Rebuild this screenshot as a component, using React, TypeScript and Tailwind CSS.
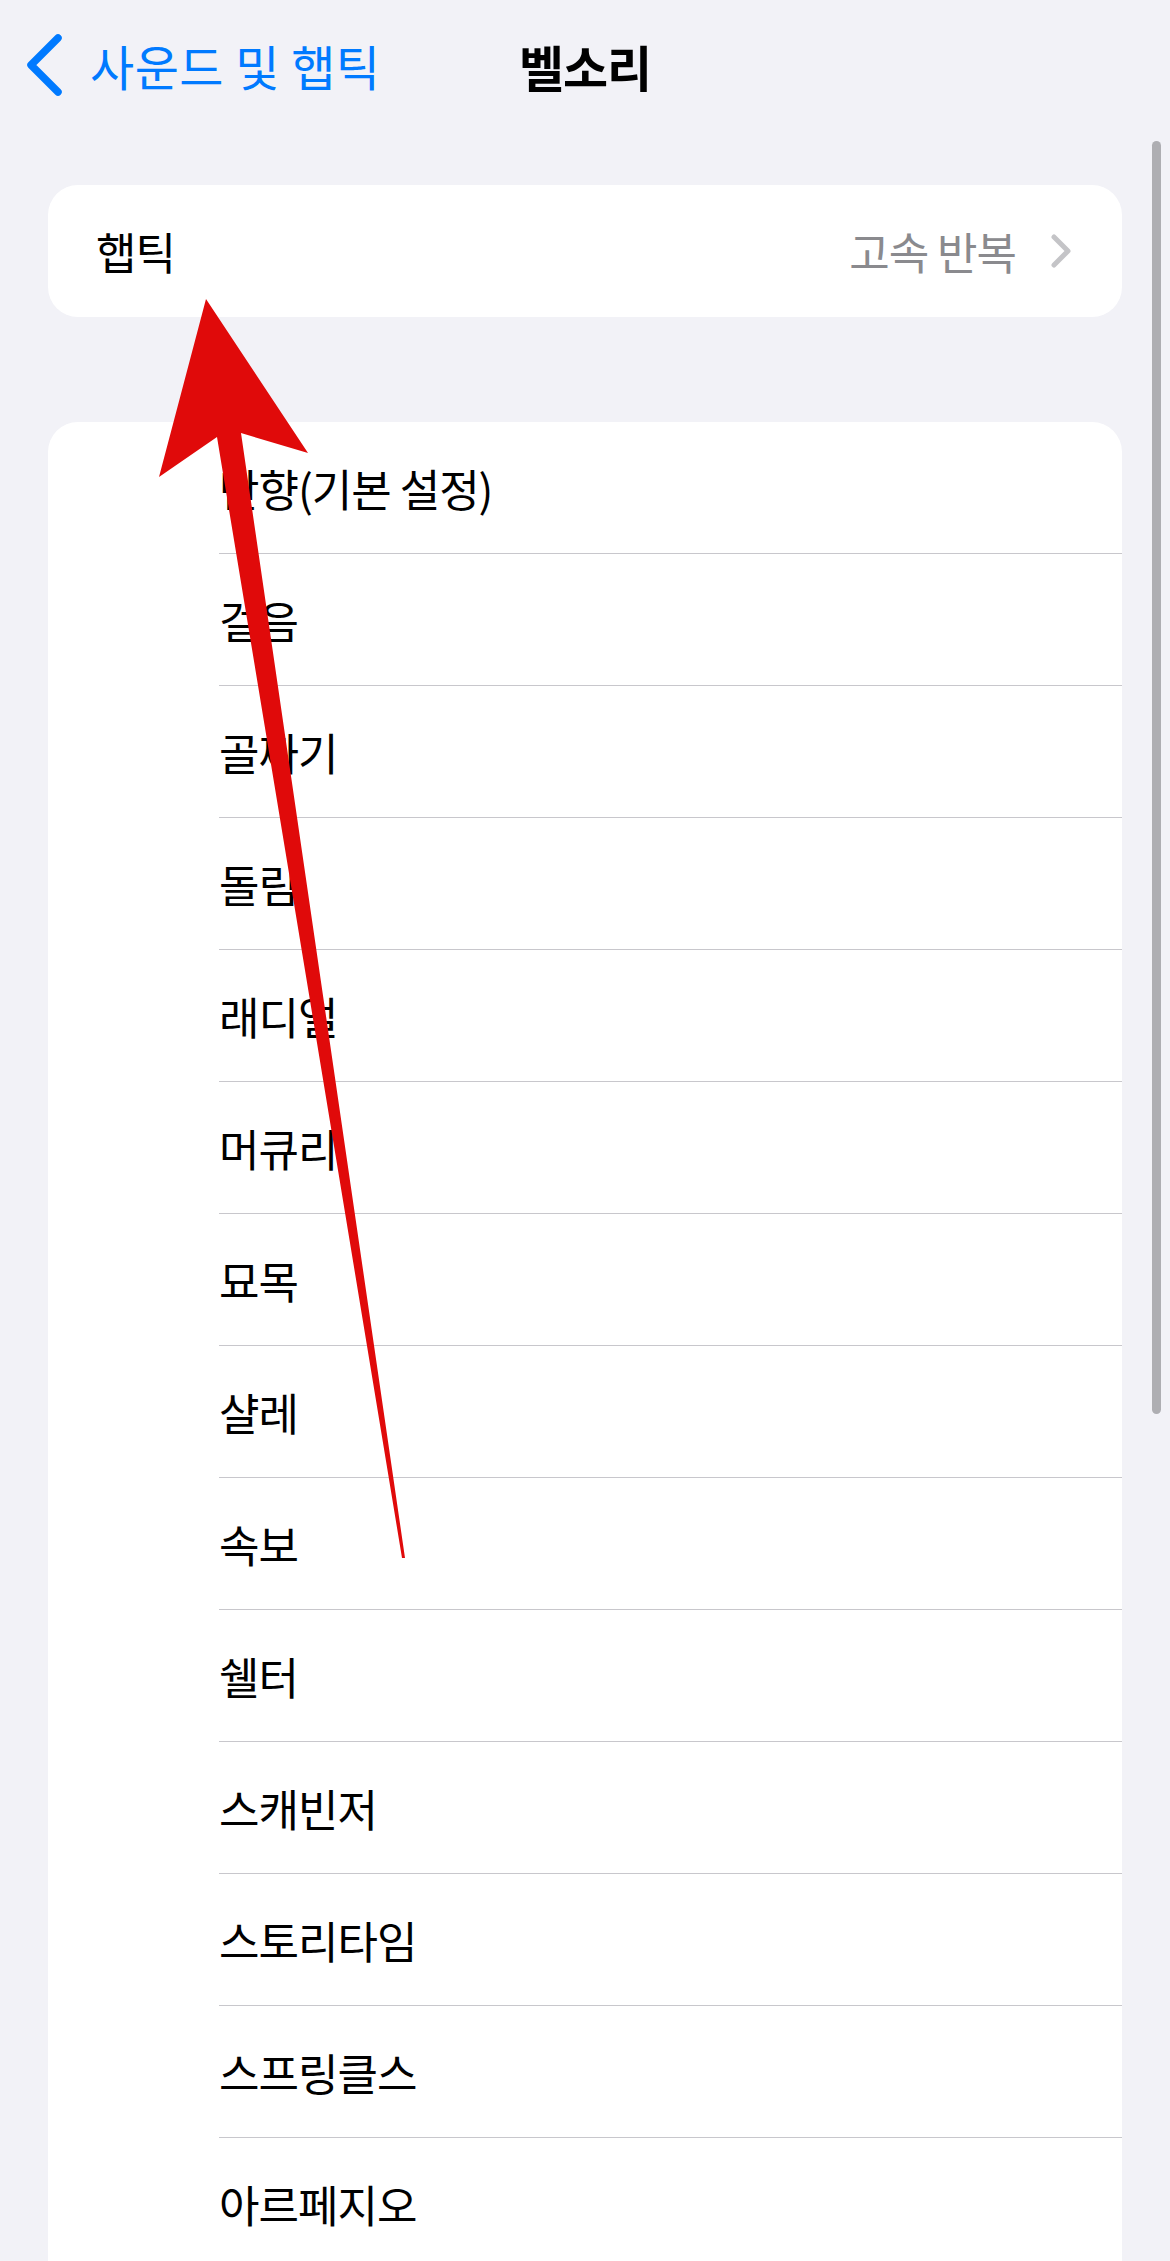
import React from "react";

const TONES = [
  "반향(기본 설정)",
  "걸음",
  "골짜기",
  "돌림",
  "래디얼",
  "머큐리",
  "묘목",
  "샬레",
  "속보",
  "쉘터",
  "스캐빈저",
  "스토리타임",
  "스프링클스",
  "아르페지오",
];

const FONT = {
  fontFamily: '"Noto Sans CJK KR", "Noto Sans", sans-serif',
};

export default function App() {
  return (
    <div
      className="relative w-[1170px] h-[2261px] overflow-hidden bg-[#f2f2f7] text-black"
      style={FONT}
    >
      {/* 내비게이션 바 */}
      <div className="grid grid-cols-[1fr_auto_1fr] items-center h-[130px]">
        <div className="flex items-center pl-[24px] gap-[26px] text-[#007aff]">
          <svg width="40" height="62" viewBox="0 0 40 62" fill="none">
            <path
              d="M34 4 L7 31 L34 58"
              stroke="#007aff"
              strokeWidth="7.5"
              strokeLinecap="round"
              strokeLinejoin="round"
            />
          </svg>
          <span className="text-[48px] tracking-[0.5px] leading-none">
            사운드 및 햅틱
          </span>
        </div>
        <h1 className="text-[49px] font-bold tracking-[-1px] leading-none">
          벨소리
        </h1>
        <div />
      </div>

      {/* 햅틱 카드 */}
      <div className="mt-[55px] mx-[48px] h-[132px] rounded-[30px] bg-white flex items-center justify-between pl-[48px] pr-[50px]">
        <span className="text-[44px] tracking-[-1px] leading-none">햅틱</span>
        <div className="flex items-center gap-[34px]">
          <span className="text-[44px] tracking-[-1px] leading-none text-[#8a8a8e]">
            고속 반복
          </span>
          <svg width="22" height="34" viewBox="0 0 22 34" fill="none">
            <path
              d="M4 3 L18 17 L4 31"
              stroke="#c4c4c7"
              strokeWidth="5"
              strokeLinecap="round"
              strokeLinejoin="round"
            />
          </svg>
        </div>
      </div>

      {/* 벨소리 목록 */}
      <div className="mt-[105px] mx-[48px] rounded-t-[30px] bg-white">
        {TONES.map((tone, index) => (
          <div key={index} className="pl-[171px]">
            <div
              className={
                index < TONES.length - 1
                  ? "h-[132px] flex items-center border-b border-[#c8c7cc]"
                  : "h-[132px] flex items-center"
              }
            >
              <span className="text-[44px] tracking-[-1px] leading-none">
                {tone}
              </span>
            </div>
          </div>
        ))}
      </div>

      {/* 스크롤 막대 */}
      <div className="absolute right-[9px] top-[141px] w-[9px] h-[1273px] rounded-full bg-[#aeaeb2]" />

      {/* 빨간 화살표 표시 */}
      <svg
        className="absolute inset-0 pointer-events-none"
        width="1170"
        height="2261"
        viewBox="0 0 1170 2261"
      >
        <polygon
          points="206,299 308,453 241,433 405,1558 402,1558 217,437 159,477"
          fill="#e00a0a"
        />
      </svg>
    </div>
  );
}
